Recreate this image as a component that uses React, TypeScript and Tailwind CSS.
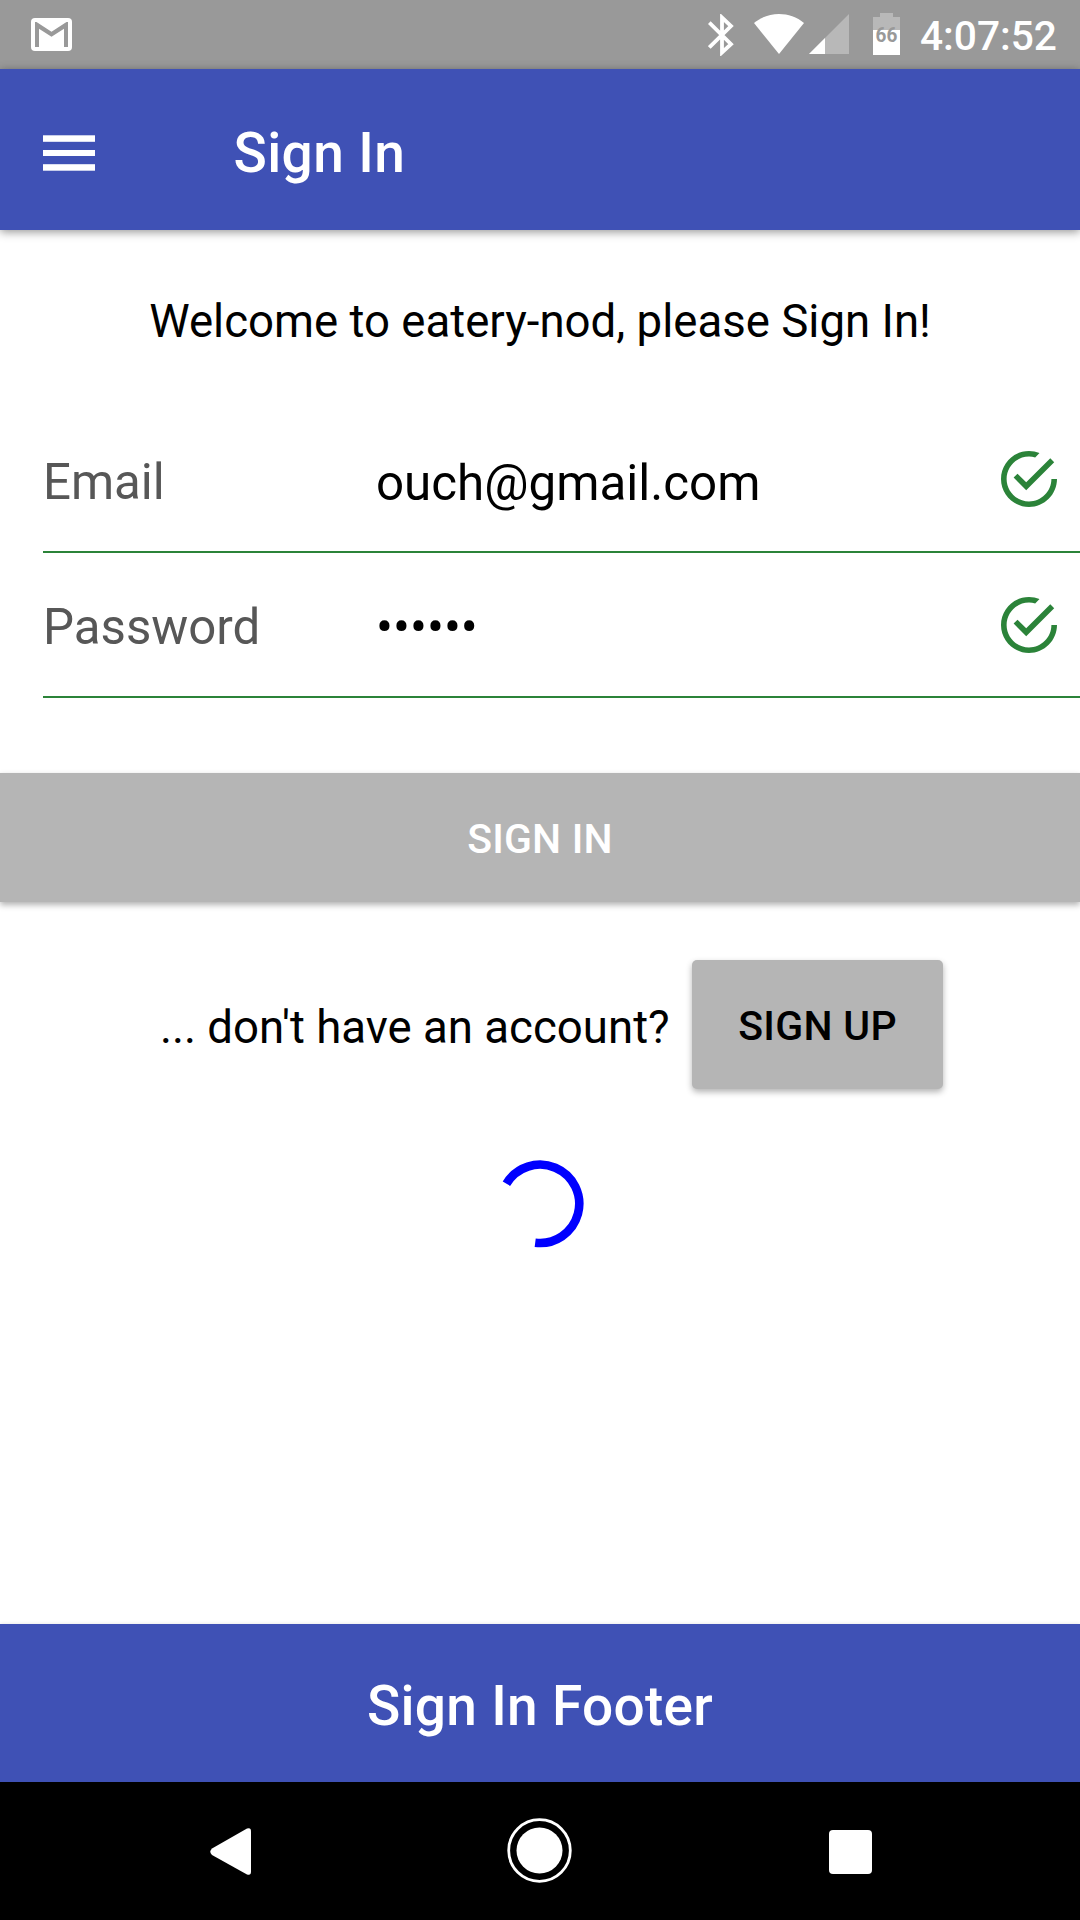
import type { ReactNode } from 'react';

function StatusBar() {
  return (
    <div className="flex h-[69px] shrink-0 items-start bg-[#999999] text-white">
      <svg className="mt-[18px] ml-[31px] h-[33px] w-[41px]" viewBox="0 0 41 33">
        <rect width="41" height="33" rx="4" fill="#fff" />
        <path d="M4 29V4h1.5L20.500 13.700 35.500 4H37v25h-4V10.800L20.500 18.700 8 10.800V29z" fill="#999999" />
      </svg>
      <svg className="mt-[14px] ml-auto h-[42px] w-[26px]" viewBox="0 0 26 42">
        <path d="M1.300 8.700 23 30.200 14 38.500V3.500L23 12 1.300 33.500" fill="none" stroke="#fff" strokeWidth="3.800" />
      </svg>
      <svg className="mt-[14px] ml-5 h-10 w-[50px]" viewBox="0 0 50 40">
        <path d="M0 9C14-3 36-3 50 9L25 40z" fill="#fff" />
      </svg>
      <svg className="mt-[14px] ml-[5px] h-10 w-10" viewBox="0 0 40 40">
        <path d="M0 40 40 0v40z" fill="#b8b8b8" />
        <path d="M0 40 16 24v16z" fill="#fff" />
      </svg>
      <div className="mt-[13px] ml-6 flex w-[27px] flex-col items-center">
        <div className="h-1 w-[13px] bg-[#b8b8b8]" />
        <div className="flex h-[38px] w-[27px] justify-center bg-linear-to-b from-[#b8b8b8] from-[13px] to-white to-[13px]">
          <span className="scale-x-95 pt-[7px] text-[20px] leading-[22px] font-bold text-[#999999]">66</span>
        </div>
      </div>
      <span className="mt-[12px] mr-[23px] ml-5 text-[40.7px] leading-[48px] font-medium">4:07:52</span>
    </div>
  );
}

function Header() {
  return (
    <header className="relative z-10 flex h-[161px] shrink-0 items-center bg-[#3f51b5] pl-[43px] text-white shadow-[0_2px_9px_rgba(0,0,0,0.42)]">
      <svg className="mt-[7px] h-9 w-[52px]" viewBox="0 0 52 36" fill="#fff">
        <rect y="0.300" width="52" height="6.500" />
        <rect y="15" width="52" height="6" />
        <rect y="29.200" width="52" height="6.500" />
      </svg>
      <h1 className="ml-[138.5px] pt-[7px] text-[55px] leading-[64px] font-medium tracking-[0.4px]">Sign In</h1>
    </header>
  );
}

function CheckIcon() {
  return (
    <svg className="size-14" viewBox="48 48 416 416" fill="#2b8339">
      <path d="M170.718 216.482 141.600 245.600l93.600 93.600 208-208-29.118-29.118L235.200 279.918zM422.400 256c0 91.518-74.883 166.400-166.400 166.400S89.600 347.518 89.600 256 164.482 89.600 256 89.600c15.600 0 31.200 2.082 45.764 6.241L334 62.600C310.082 53.283 284.082 48 256 48 141.600 48 48 141.600 48 256s93.600 208 208 208 208-93.600 208-208z" />
    </svg>
  );
}

function Field({ label, iconClass, children }: { label: string; iconClass: string; children: ReactNode }) {
  return (
    <div className="ml-[43px] flex h-[145px] items-center border-b-2 border-[#2b8339] pr-[23px] leading-[58px]">
      <span className="w-[333px] pt-1 text-[49.2px] text-[#575757]">{label}</span>
      <span className="flex-1 text-[49.3px] text-black">{children}</span>
      <div className={iconClass}>
        <CheckIcon />
      </div>
    </div>
  );
}

function NavBar() {
  return (
    <nav className="flex h-[138px] shrink-0 items-start bg-black">
      <svg className="mt-[46px] ml-[210px] h-[47px] w-[41px]" viewBox="0 0 41 47">
        <path d="M37 .600Q41-1 41 3.500V43.500Q41 48 37 46.400L2 27Q-1.500 23.800 2 20.500z" fill="#fff" />
      </svg>
      <svg className="mt-9 ml-[256px] h-[66px] w-[66px]" viewBox="0 0 66 66">
        <circle cx="32.500" cy="32.500" r="30.800" fill="none" stroke="#fff" strokeWidth="2.800" />
        <circle cx="32.500" cy="32.500" r="23" fill="#fff" />
      </svg>
      <div className="mt-12 ml-[256px] h-11 w-[43px] rounded-[4px] bg-white" />
    </nav>
  );
}

export default function App() {
  return (
    <div className="flex h-[1920px] w-[1080px] flex-col overflow-hidden bg-white font-[Roboto,sans-serif]">
      <StatusBar />
      <Header />
      <main className="flex flex-1 flex-col">
        <p className="mt-[65px] text-center text-[45.6px] leading-[53px] text-black">
          Welcome to eatery-nod, please Sign In!
        </p>
        <div className="mt-[60px]">
          <Field label="Email" iconClass="pb-px">
            <span className="block pt-[7px]">ouch@gmail.com</span>
          </Field>
          <Field label="Password" iconClass="pt-px">
            <span className="block pt-1 text-[50.3px]">••••••</span>
          </Field>
        </div>
        <button className="mt-[75px] flex h-[129px] w-full items-center justify-center bg-[#b5b5b5] pt-[3px] text-[41px] leading-[48px] font-medium tracking-[0.2px] text-white shadow-[0_3px_6px_rgba(0,0,0,0.3)]">
          SIGN IN
        </button>
        <div className="mt-[58px] flex h-[129px] items-center pl-40">
          <span className="w-[532px] pt-[5px] text-[45.6px] leading-[53px] text-black">... don't have an account?</span>
          <button className="flex h-[129px] w-[251px] items-center justify-center rounded-[5px] bg-[#b5b5b5] pt-0.5 text-[41px] leading-[48px] font-medium tracking-[0.3px] text-black shadow-[0_3px_6px_rgba(0,0,0,0.3)]">
            SIGN UP
          </button>
        </div>
        <svg className="mt-[71px] h-[88px] w-[88px] self-center" viewBox="0 0 88 88">
          <path d="M10.400 23.700A39.200 39.200 0 1 1 39.200 82.700" fill="none" stroke="#0000ff" strokeWidth="8.600" />
        </svg>
      </main>
      <footer className="flex h-[158px] shrink-0 items-center justify-center bg-[#3f51b5] pt-[6px] text-[55px] leading-[64px] font-medium tracking-[0.3px] text-white shadow-[0_0_4px_rgba(0,0,0,0.12)]">
        Sign In Footer
      </footer>
      <NavBar />
    </div>
  );
}
